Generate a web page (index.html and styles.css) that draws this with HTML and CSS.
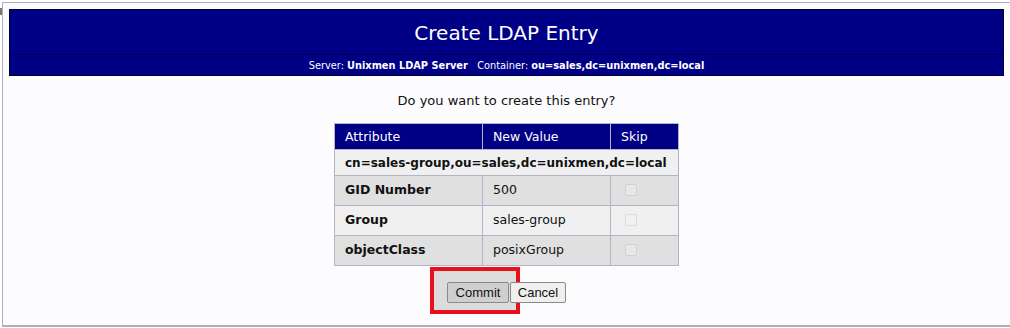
FILE: index.html
```html
<!DOCTYPE html>
<html>
<head>
<meta charset="utf-8">
<link rel="stylesheet" href="styles.css">
</head>
<body>
<div class="mark"></div>
<div class="frame">
  <div class="hdr">
    <div class="title">Create LDAP Entry</div>
    <div class="sub">Server: <b>Unixmen LDAP Server</b>&nbsp;&nbsp; Container: <b>ou=sales,dc=unixmen,dc=local</b></div>
  </div>
  <p class="question">Do you want to create this entry?</p>
  <table class="entry">
    <tr class="head"><td class="c1">Attribute</td><td class="c2">New Value</td><td class="c3">Skip</td></tr>
    <tr class="dn"><td colspan="3">cn=sales-group,ou=sales,dc=unixmen,dc=local</td></tr>
    <tr class="even"><td class="attr">GID Number</td><td>500</td><td><input type="checkbox" disabled></td></tr>
    <tr class="odd"><td class="attr">Group</td><td>sales-group</td><td><input type="checkbox" disabled></td></tr>
    <tr class="even"><td class="attr">objectClass</td><td>posixGroup</td><td><input type="checkbox" disabled></td></tr>
  </table>
  <div class="actions">
    <div class="btnwrap">
      <span class="highlight"></span>
      <button class="btn commit">Commit</button><button class="btn cancel">Cancel</button>
    </div>
  </div>
</div>
</body>
</html>
```
FILE: styles.css
```css
html, body { margin: 0; padding: 0; background: #ffffff; }
body { width: 1010px; height: 328px; overflow: hidden; position: relative; font-family: "DejaVu Sans", Verdana, sans-serif; }
.mark { position: absolute; left: 0; top: 8px; width: 2px; height: 7px; background: #777; }
.frame {
  margin: 2px 0 0 2px;
  border-top: 1px solid #b0b0b4;
  border-left: 1px solid #b0b0b4;
  border-bottom: 2px solid #b0b0b4;
  background: #fcfcfe;
  padding: 6px 6px 0 6px;
  box-sizing: border-box;
  height: 325px;
}
.hdr { background: #000086; border: 1px solid #000030; color: #fff; }
.title { height: 44px; line-height: 46px; text-align: center; font-size: 20px; border-bottom: 1px solid #000048; }
.sub { height: 20px; line-height: 21px; text-align: center; font-size: 9.8px; }
.question { margin: 15px 0 0 0; text-align: center; font-size: 13px; color: #111; line-height: 19px; }
.entry { margin: 13px auto 0 auto; border-collapse: collapse; font-size: 12.5px; color: #111; }
.entry td { border: 1px solid #b4b4c8; padding: 0 10px; text-align: left; }
.entry .c1 { width: 127px; }
.entry .c2 { width: 107px; }
.entry .c3 { width: 47px; }
.head td { background: #000086; color: #fff; height: 25px; border-color: #b4b4c8; }
.dn td { background: #f0f0f0; font-weight: bold; height: 24px; padding-top: 1px; font-size: 12px; }
.even td, .odd td { height: 27px; padding-bottom: 2px; }
.even td { background: #e0e0e0; }
.odd td { background: #f0f0f0; }
.attr { font-weight: bold; }
.entry input { margin: 3px 0 0 4px; width: 12px; height: 12px; opacity: 0.6; }
.actions { display: flex; justify-content: center; margin-top: 16px; }
.btnwrap { position: relative; display: flex; }
.highlight { position: absolute; left: -17px; top: -15px; width: 82px; height: 39px; border: 4px solid #e8101c; background: #dcdcdc; }
.btn { position: relative; font-family: "Liberation Sans", Arial, sans-serif; font-size: 13px; height: 21px; padding: 0 6px; border: 1px solid #8a8a8a; border-radius: 2px; color: #111; }
.commit { width: 62px; background: #cfcfcf; margin-right: 1px; }
.cancel { width: 56px; background: #efefef; }
```
